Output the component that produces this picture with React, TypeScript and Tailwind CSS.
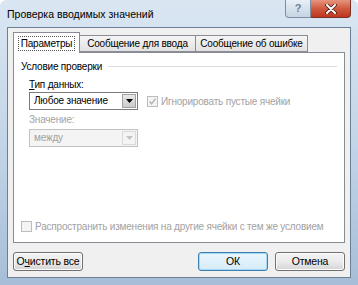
import React from 'react';

const font = { fontFamily: '"Liberation Sans", Arial, sans-serif' };

function Checkbox({ checked, disabled }: { checked?: boolean; disabled?: boolean }) {
  return (
    <span
      className={`flex h-[11px] w-[11px] shrink-0 items-center justify-center border ${
        disabled ? 'border-[#bcbcbc] bg-[#f4f4f4]' : 'border-[#8f8f8f] bg-white'
      }`}
    >
      {checked && (
        <svg width="9" height="9" viewBox="0 0 9 9">
          <path d="M1.5 4.5 L3.5 6.8 L7.6 1.6" fill="none" stroke="#b4b4b4" strokeWidth="1.4" />
        </svg>
      )}
    </span>
  );
}

function Select({ value, disabled }: { value: string; disabled?: boolean }) {
  return (
    <div
      className={`flex h-[18px] w-[109px] shrink-0 items-stretch border ${
        disabled ? 'border-[#c2c2c2] bg-[#f4f4f4]' : 'border-[#7b7b7b] bg-white'
      }`}
    >
      <span
        className={`flex-1 whitespace-nowrap pl-[4px] leading-[16px] ${disabled ? 'text-[#a2a2a2]' : 'text-black'}`}
      >
        {value}
      </span>
      <span
        className={`m-px flex w-[14px] items-center justify-center border ${
          disabled
            ? 'border-[#dadada] bg-[#f4f4f4]'
            : 'border-[#a0a0a0] bg-gradient-to-b from-[#e8e8e8] to-[#cbcbcb]'
        }`}
      >
        <svg width="7" height="4" viewBox="0 0 7 4">
          <path d="M0 0 H7 L3.5 4 Z" fill={disabled ? '#c4c4c4' : '#000'} />
        </svg>
      </span>
    </div>
  );
}

function Button({ children, primary }: { children: React.ReactNode; primary?: boolean }) {
  return (
    <button
      className={`flex h-[19px] w-[70px] items-center justify-center whitespace-nowrap rounded-[3px] border text-[10.5px] tracking-[-0.2px] text-black ${
        primary
          ? 'border-[#3c7fb1] bg-gradient-to-b from-[#eaf6fd] to-[#d6ecf8] shadow-[inset_0_0_0_1px_#a6d8f5]'
          : 'border-[#707070] bg-gradient-to-b from-[#f2f2f2] via-[#ebebeb] to-[#d5d5d5] shadow-[inset_0_0_0_1px_#fcfcfc]'
      }`}
    >
      {children}
    </button>
  );
}

export default function App() {
  return (
    <div
      className="relative flex h-[285px] w-[358px] flex-col overflow-hidden rounded-t-[6px] bg-gradient-to-b from-[#dae6f2] via-[#c3d5e8] to-[#a6bed7] text-[10px] tracking-[-0.2px]"
      style={font}
    >
      {/* title bar */}
      <div className="flex h-[27px] items-start justify-between pl-[7px] pr-[7px]">
        <span className="whitespace-nowrap pt-[7px] text-[10.5px] tracking-normal text-black">
          Проверка вводимых значений
        </span>
        <div className="flex">
          <div className="flex h-[18px] w-[26px] items-center justify-center rounded-bl-[4px] border border-t-0 border-[#7f8fa3] bg-gradient-to-b from-[#e8eff6] to-[#c5d4e3]">
            <span className="text-[11px] font-bold text-[#6f7f92]">?</span>
          </div>
          <div className="flex h-[18px] w-[40px] items-center justify-center rounded-br-[4px] border border-l-0 border-t-0 border-[#7a3329] bg-gradient-to-b from-[#e6957f] via-[#cf5a3f] to-[#c0341d]">
            <svg width="12" height="10" viewBox="0 0 12 10">
              <path d="M2 1 L10 9 M10 1 L2 9" stroke="#4a1a14" strokeWidth="3.6" strokeLinecap="round" />
              <path d="M2 1 L10 9 M10 1 L2 9" stroke="#ffffff" strokeWidth="2" strokeLinecap="round" />
            </svg>
          </div>
        </div>
      </div>

      {/* client area */}
      <div className="mx-[7px] flex h-[251px] flex-col border border-[#6b7f95] bg-[#f0f0f0] px-[5px] pt-[4px]">
        {/* tabs */}
        <div className="relative z-10 flex h-[20px] items-end whitespace-nowrap">
          <div className="-mb-px flex h-[21px] w-[67px] items-center justify-center border border-b-0 border-[#898c95] bg-white">
            <span className="border border-dotted border-[#555] px-[2px] leading-[13px]">Параметры</span>
          </div>
          <div className="flex h-[17px] w-[116px] items-center justify-center border border-l-0 border-[#898c95] bg-gradient-to-b from-[#f5f5f5] to-[#e3e3e3]">
            Сообщение для ввода
          </div>
          <div className="flex h-[17px] w-[112px] items-center justify-center border border-l-0 border-[#898c95] bg-gradient-to-b from-[#f5f5f5] to-[#e3e3e3]">
            Сообщение об ошибке
          </div>
        </div>

        {/* panel */}
        <div className="flex h-[191px] flex-col border border-[#898c95] bg-white px-[7px] pt-[7px]">
          <div className="flex h-[12px] items-center gap-[6px]">
            <span className="whitespace-nowrap text-black">Условие проверки</span>
            <span className="h-px flex-1 bg-[#dcdcdc]" />
          </div>
          <div className="pl-[8px] pt-[6px]">
            <div className="leading-[14px]">
              <span className="underline">Т</span>ип данных:
            </div>
            <div className="flex items-center gap-[9px]">
              <Select value="Любое значение" />
              <div className="flex items-center gap-[3px] whitespace-nowrap text-[#a2a2a2]">
                <Checkbox checked disabled />
                <span>Игнорировать пустые ячейки</span>
              </div>
            </div>
            <div className="mt-[3px] leading-[14px] text-[#a2a2a2]">Значение:</div>
            <div className="mt-[2px]">
              <Select value="между" disabled />
            </div>
          </div>
          <div className="mb-[8px] mt-auto flex items-center gap-[3px] whitespace-nowrap text-[#a2a2a2]">
            <Checkbox disabled />
            <span>Распространить изменения на другие ячейки с тем же условием</span>
          </div>
        </div>

        {/* buttons */}
        <div className="mt-[9px] flex items-center">
          <Button>
            О<span className="underline">ч</span>истить все
          </Button>
          <div className="ml-auto flex gap-[7px]">
            <Button primary>ОК</Button>
            <Button>Отмена</Button>
          </div>
        </div>
      </div>
    </div>
  );
}
